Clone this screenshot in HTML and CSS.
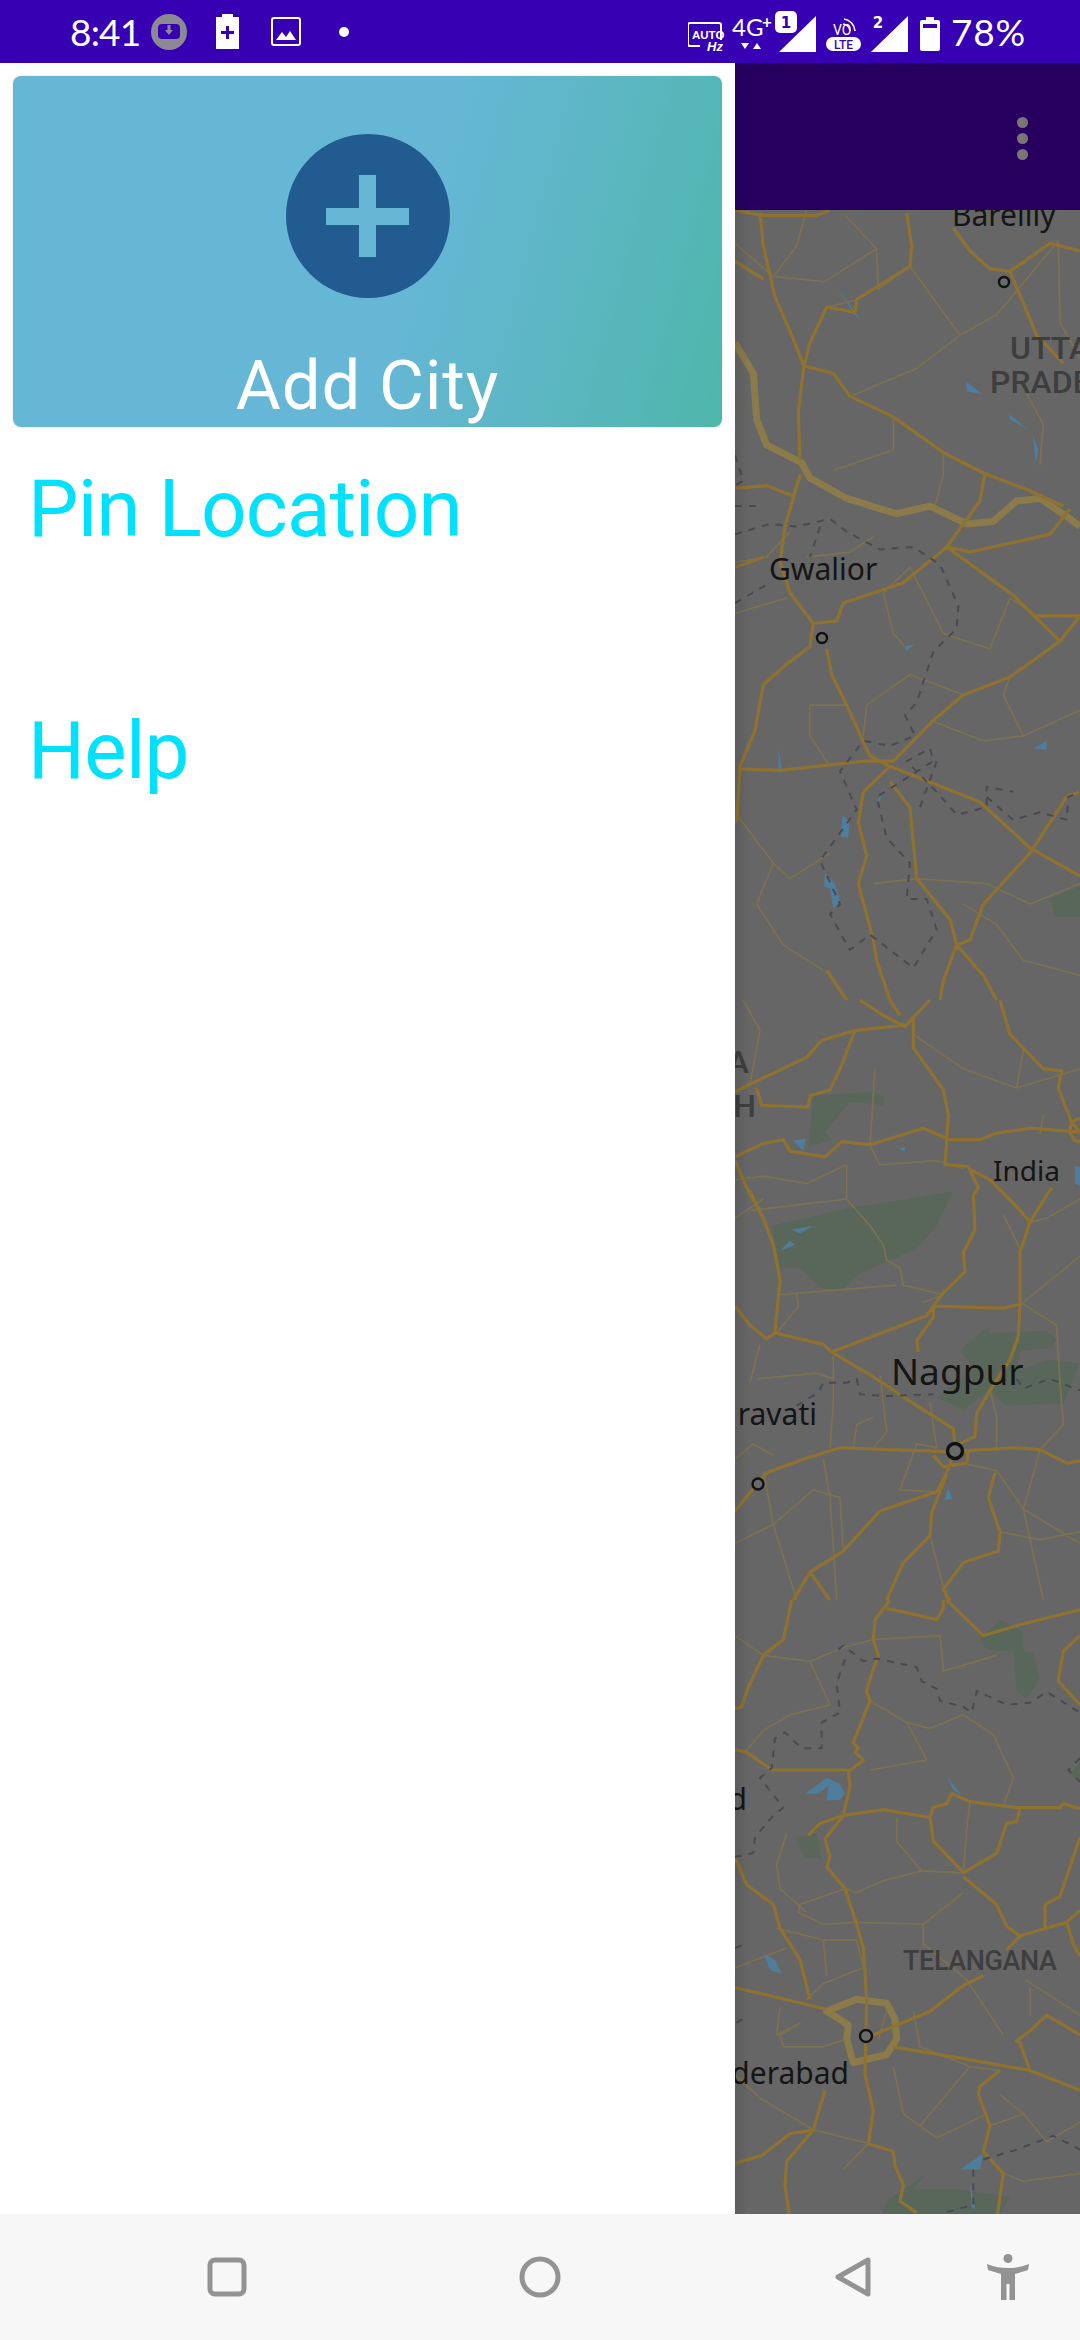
FILE: index.html
```html
<!DOCTYPE html>
<html lang="en">
<head>
  <meta charset="UTF-8" />
  <meta name="viewport" content="width=device-width, initial-scale=1.0"/>
  <title>Add City</title>
  <link rel="stylesheet" href="styles.css">
</head>
<body>

  <div class="status-bar">
    <div class="status-left">
      <span class="status-text status-time">8:41</span>
      <svg class="icon-download" width="36" height="36" viewBox="0 0 36 36">
        <circle cx="18" cy="18" r="18" fill="#8b8a94"/>
        <rect x="7" y="10" width="22" height="15" rx="4" fill="#3700b3"/>
        <path d="M16.5 11h3v5h2.500l-4 5-4-5h2.500z" fill="#8b8a94"/>
      </svg>
      <svg class="icon-charge" width="23" height="35" viewBox="0 0 23 35">
        <path d="M6 0h11v3h6v32H0V3h6z" fill="#fff"/>
        <path d="M10 12h3v5h5v3h-5v5h-3v-5H5v-3h5z" fill="#3700b3"/>
      </svg>
      <svg class="icon-image" width="30" height="29" viewBox="0 0 30 29">
        <rect x="1" y="1" width="28" height="27" rx="2" fill="none" stroke="#fff" stroke-width="2"/>
        <path d="M5 23l6-8 4 5 4-6 6 9z" fill="#fff"/>
      </svg>
      <svg class="icon-dot" width="10" height="10" viewBox="0 0 10 10"><circle cx="5" cy="5" r="5" fill="#fff"/></svg>
    </div>
    <div class="status-right">
      <svg width="256" height="46" viewBox="688 6 256 46">
        <!-- auto hz -->
        <path d="M700 43h-10a2 2 0 0 1-2-2V22a2 2 0 0 1 2-2h29a2 2 0 0 1 2 2v15" fill="none" stroke="#fff" stroke-width="2"/>
        <text class="si-auto" x="692" y="36">AUTO</text>
        <text class="si-hz" x="707" y="48">Hz</text>
        <!-- 4G+ -->
        <text class="si-4g" x="732" y="33">4G</text>
        <text class="si-plus" x="762" y="25">+</text>
        <path d="M741 40h8l-4 6zM753 46h8l-4-6z" fill="#fff"/>
        <!-- sim 1 -->
        <path d="M816 13v36h-37z" fill="#fff"/>
        <rect x="775" y="8" width="22" height="22" rx="5" fill="#fff"/>
        <text class="si-sim" x="786" y="25">1</text>
        <!-- volte -->
        <text class="si-vo" x="833" y="32">VO</text>
        <path d="M843 21a8 8 0 0 1 7 7M844 16a13 13 0 0 1 11 12" fill="none" stroke="#fff" stroke-width="1.6"/>
        <rect x="826" y="34" width="35" height="14" rx="7" fill="#fff"/>
        <text class="si-lte" x="843.5" y="46">LTE</text>
        <!-- sim 2 -->
        <text class="si-two" x="878" y="25">2</text>
        <path d="M908 13v36h-37z" fill="#fff"/>
        <!-- battery -->
        <path d="M926 14h8v3h4a2 2 0 0 1 2 2v27a2 2 0 0 1-2 2h-16a2 2 0 0 1-2-2V19a2 2 0 0 1 2-2h4z" fill="#fff"/>
        <rect x="923" y="21" width="14" height="4" fill="#3700b3"/>
      </svg>
      <span class="status-text battery-text">78%</span>
    </div>
  </div>

  <div class="main">
    <div class="drawer">
      <div class="add-card">
        <div class="add-circle">
          <svg width="83" height="82" viewBox="0 0 83 82"><path d="M33 0h17v33h33v17H50v32H33V50H0V33h33z" fill="#66b7d6"/></svg>
        </div>
        <div class="add-label">Add City</div>
      </div>
      <div class="menu-item">Pin Location</div>
      <div class="menu-item">Help</div>
    </div>

    <div class="content">
      <div class="toolbar">
        <div class="overflow-dots"><span></span><span></span><span></span></div>
      </div>
      <div class="map">
        <svg width="345" height="2004" viewBox="735 210 345 2004">
          <!-- top section -->
          <g transform="translate(730 200) scale(.33333 .5102)">
            <path class="park" d="M960 1370L1050 1345V1405H975Z"/>
            <path class="lake" d="M708 355L755 380L710 375ZM838 420L895 450L840 430ZM908 460L925 490L918 515ZM525 875L555 870L528 885ZM145 1075L155 1115L145 1115ZM910 1075L950 1060V1078ZM338 1205L358 1220L355 1250L332 1248ZM285 1320L315 1340L330 1375L310 1390L300 1350L282 1345ZM320 170L395 238L370 222ZM440 1180L465 1150L445 1185Z"/>
            <path class="minor" d="M15 85L130 150L285 160L440 95L345 30M130 150L200 90L230 20M440 95L445 175L540 130M290 210L385 195M690 265L540 130M690 265L560 330L360 385M690 265L800 225L985 80L990 240L1050 310M490 425L490 490L310 530M640 495L640 540L610 610M780 880L840 780L920 815M780 880L640 850L540 720L460 770L490 850L525 875M840 935L820 970L880 1050L1050 1000M880 1050L760 1060L600 1020M700 970L540 930L410 990L400 1050M350 990L240 990L240 1050L300 1110M15 1200L130 1300L80 1380L160 1460L280 1510M130 1300L180 1330L300 1280M560 1330L770 1340L900 1380L1050 1340M430 1340L560 1330M890 380L940 440L930 520M15 710L110 700L180 650M15 810L170 780M230 700L360 690L430 660M700 1380L800 1420L880 1490L1050 1520"/>
            <path class="thick" d="M15 280L70 340L80 430L110 480L215 515L240 545L350 585L500 615L600 600L710 635L790 630L860 590L930 585L1020 625L1050 640"/>
            <path class="road" d="M90 25L100 90L135 190L185 265L222 325M530 25L545 90L540 130L380 195L375 220L290 210L240 280L222 325L205 415L210 510M222 325L310 340L360 385L490 425L640 495L760 535L900 570L1000 600M15 120L100 155M15 565L110 560L190 580L210 540L165 640L150 710L180 770L250 830L240 875L170 910L100 950L75 1040L30 1110L20 1220M250 830L320 825L340 790L520 750L650 680L750 590L765 535M650 680L720 690L860 670L960 655L1020 605M650 680L850 775L990 865L1050 815M920 815H1050M990 865L840 935L700 970L610 1020L490 1100L400 1100L150 1118L30 1115M290 880L305 930L350 990L420 1090L480 1110L750 1180L900 1270L1050 1325M480 1110L400 1160L385 1220L410 1285L385 1340L430 1450L440 1490L480 1568M480 1140L540 1190L560 1330L660 1410L680 1460L640 1530L630 1568M1050 1160L1010 1170L900 1280L760 1380L720 1450L680 1460L760 1520L800 1568M290 1510L350 1568M670 55L720 100L780 135L840 140L960 85L1050 100M840 140L920 265L1000 320M15 20L90 30L260 30L300 20M15 720L100 700"/>
            <path class="border" d="M15 655L120 635L200 640L300 625L350 650L450 685L550 680L630 715L685 795L680 840L610 885L560 985L525 1010L555 1050L480 1070L400 1060L330 1120L380 1195L270 1295L330 1380L300 1400L360 1470L420 1440L550 1505L620 1430L590 1370L530 1370L540 1300L470 1250L440 1170L610 1100L600 1075L530 1100L620 1160L680 1205L770 1190L770 1150L850 1160M15 790L120 750M15 500L40 550L15 560M15 600L85 600M270 640L240 700M770 1170L850 1215L930 1200L1010 1215L1015 1170L1050 1160M570 1190L620 1100"/>
          </g>

          <!-- middle section -->
          <g transform="translate(730 1000) scale(.33333 .3827)">
            <path class="park" d="M125 590L350 545L670 500L620 590L560 650L390 715L340 755L280 755L210 700L150 700ZM250 250L430 240L465 255L460 275L360 265L285 345L305 365L235 385ZM690 915L770 855L780 870L950 865L980 885L965 910L870 915L860 970L960 940L1050 950L1000 1055L830 1060L780 1020L700 1070L620 1040L730 960Z"/>
            <path class="lake" d="M190 368L228 362L220 395ZM505 388L525 384V396ZM185 600L250 590L210 610ZM150 655L180 630L195 640ZM1035 435H1050V485L1035 480ZM655 1275L668 1305H645Z"/>
            <path class="minor" d="M350 430V520L420 590L460 640L470 680L510 700L520 745L640 770M60 550L350 520M15 570L100 520M200 770L205 800L140 870M150 770L500 745M310 930V1050L300 1170M90 900L60 1000M80 990L260 975L310 990M880 790L1050 670M820 560L870 650M435 180L420 380L450 430L620 420L700 440M640 770L580 790M15 470L100 460L230 480L350 430M550 90L700 180L860 230L1050 180M860 230L880 130M940 300L930 350M1050 520L950 570L900 580M870 790L980 850L990 1000L1000 1110L930 1175M450 980L470 1130L430 1170M600 1050L620 1170L560 1160L510 1280L620 1285M370 1170L380 1110L430 1090M280 1200L300 1300L320 1568M100 1230L130 1370L200 1568M15 1200L70 1160L130 1190M15 1420L130 1370L250 1280L330 1300L340 1440M700 1210L800 1230L880 1330L1050 1420M810 1390L930 1410L1050 1390M930 1175L900 1270L880 1330L940 1568M600 1400L650 1568M800 1180L800 1090L780 1020M40 0L90 80L60 220"/>
            <path class="road" d="M390 0L460 40L525 70L550 45L600 0M480 0L510 40M525 65L375 80L275 105L230 150L60 220L15 240M375 80L335 170L300 235L240 250L235 280L95 275L80 230M550 45V125L640 235L655 300L645 430L715 435L745 490L730 510L735 600L700 660L705 710L635 770L610 800V830L560 890L565 920M810 0L840 90L940 180L995 185L985 230L1025 320L1050 345M15 410L100 375L160 365L180 395L285 410L335 370L420 378L580 335L660 365L750 365L800 348L900 335L1050 345M15 420L50 490L100 570L130 640L150 730L135 870L110 885L60 850L15 800M135 870L280 900L305 920L590 825L610 800L820 805L870 795V660L900 580L965 490M715 440L780 470L860 540L900 580M870 795L865 880L840 940L780 1020L740 1080L735 1140L675 1165L670 1120L560 1060L430 985L305 920M15 1335L110 1235L220 1200L330 1170L650 1180M700 1178L850 1170L930 1175L1010 1210L1050 1205M670 1190L650 1235L620 1285L450 1335L340 1440L240 1495L190 1568M650 1240L605 1340L600 1400L520 1470L470 1568M795 1235L775 1300L810 1390L805 1440L700 1470L640 1540L660 1568M240 1495L300 1568M610 1190L640 1220L710 1210L715 1180M1050 310A30 30 0 0 0 1050 370M60 500L100 570"/>
            <path class="border" d="M200 1060L265 1025L280 1000L350 1000L380 990L390 1030L470 1035L610 1030M860 990L880 1015L960 990L1050 1020"/>
          </g>

          <!-- bottom section -->
          <g transform="translate(730 1600) scale(.33333 .3954)">
            <path class="park" d="M750 100L810 50L880 80V130L910 135L930 200L890 250L860 230L850 130L770 125ZM195 600L260 590L275 655L225 650ZM470 1520L540 1480L590 1450L550 1490L680 1490L840 1510L800 1568H450ZM1020 440L1050 410V460Z"/>
            <path class="lake" d="M225 490L290 450L330 465L345 490L330 505L290 507L295 470L265 490ZM100 895L135 910L155 945L120 935ZM650 445L695 495L670 480ZM690 1440L760 1400L750 1440ZM720 1470L735 1540L725 1535Z"/>
            <path class="minor" d="M15 90L100 140L240 155L340 120L430 100L630 90L640 180L800 140M240 155L300 265L180 290L100 330L50 380M530 310L420 255M530 310L600 325L700 290L790 340L850 450L820 520M590 405L420 430M590 405L550 340L530 310M500 550V610L575 685L700 690L710 580L720 510M575 685L460 710L380 740L345 730L210 770L205 790L280 820L380 815L580 820L700 740M580 820V870L710 960L820 1100M170 590L140 670L150 730L230 790M140 830L280 860L380 860L400 930L280 970L230 1010M280 860L290 950M15 930L170 880M150 1030L140 1100L210 1070L150 1100L160 1130L280 1130L350 1110M470 1040L445 1110M490 1180L520 1300L620 1360L770 1300M570 1330L720 1180M550 1040L570 1130L720 1180L810 1190M900 980L900 1050M885 960L1050 1050M340 1440L415 1375M810 1250L880 1300L950 1370L1050 1320M880 1300L780 1330M820 1450L880 1470L1050 1450M15 1200L90 1260L250 1340M250 1340L420 1375"/>
            <path class="thick" d="M290 1040L380 1010L470 1020L495 1060L500 1110L470 1150L370 1170L350 1110L355 1075L310 1050Z"/>
            <path class="road" d="M185 0L160 100L100 140L55 220L35 270L15 275M480 0L435 50L430 100L445 140L420 200L410 230L420 255L370 360L385 375L375 385L400 405L355 435L360 470L340 545L285 605L300 650L290 675L345 730L380 820L400 880L410 1010L405 1200L430 1290L415 1375L490 1395L495 1430L520 1480L510 1520L560 1550M640 0V20L620 50L520 30L470 22M650 0L760 90L880 60L1050 25M15 378L50 385L125 430H355M235 595L270 565L340 545L460 530L600 550L610 525L650 515L665 490L720 510L860 525H990L1000 515L1050 528M600 550L610 610L690 680L700 690L800 640L830 565L860 560L870 530M700 700L800 770L830 825L870 850L830 885M870 850L1010 815L1050 785M945 830V770L990 750L1050 600M15 650L50 720L130 770L150 830L210 910L240 1010M15 980L290 1035M490 1130L700 1160L900 1190L1050 1240M900 1190L870 1120L860 1115L900 1090L950 1050L1050 1100M430 1100L600 1040L700 975L760 950M810 1190L750 1230L745 1250L780 1330L760 1395L820 1450L800 1568M285 1240L250 1340L180 1350L95 1405L15 1425M250 1340L170 1420L165 1480L180 1568M1050 90L1000 130L985 205L1050 265M1010 815L1030 870L1050 900"/>
            <path class="border" d="M325 125L340 115L400 155L440 148L560 170L575 205L620 225L630 255L700 270L725 285L740 230L830 265L900 260L950 232L1050 285M345 150L320 210L330 285L275 310V375H215L165 335L135 350L125 425L90 450L160 525L125 550L75 600L70 640L15 650M1050 400L1015 430L1050 460M760 1415L860 1390L970 1355L1050 1390M730 1440V1530L640 1550M15 880L45 870M20 1070L50 1050"/>
          </g>

          <!-- cities -->
          <circle class="city" cx="1004" cy="282" r="5"/>
          <circle class="city" cx="822" cy="638" r="5"/>
          <circle class="city" cx="758" cy="1484" r="5.5"/>
          <circle class="city city-large" cx="955" cy="1451" r="7.5"/>
          <circle class="city" cx="866" cy="2036" r="6"/>

          <!-- labels -->
          <text class="map-label" x="952" y="226">Bareilly</text>
          <text class="map-label" x="769" y="580">Gwalior</text>
          <text class="map-label map-small" x="993" y="1181">India</text>
          <text class="map-label map-large" x="891" y="1385">Nagpur</text>
          <text class="map-label map-end" x="817" y="1425">ravati</text>
          <text class="map-label map-end" x="747" y="1810">d</text>
          <text class="map-label map-end" x="849" y="2084">derabad</text>
          <text class="map-state" x="1010" y="359">UTTAR</text>
          <text class="map-state" x="990" y="393">PRADESH</text>
          <text class="map-state map-end" x="749" y="1073">A</text>
          <text class="map-state map-end" x="756" y="1117">H</text>
          <text class="map-state map-telangana" x="903" y="1970">TELANGANA</text>
        </svg>
        <div class="drawer-shade"></div>
      </div>
    </div>
  </div>

  <div class="nav-bar">
    <svg class="nav-square" width="40" height="40" viewBox="0 0 40 40"><rect x="3" y="3" width="34" height="34" rx="5" fill="none" stroke="#939393" stroke-width="5"/></svg>
    <svg class="nav-circle" width="42" height="42" viewBox="0 0 42 42"><circle cx="21" cy="21" r="18" fill="none" stroke="#939393" stroke-width="5"/></svg>
    <svg class="nav-back" width="36" height="42" viewBox="0 0 36 42"><path d="M33 4V38L3 21Z" fill="none" stroke="#939393" stroke-width="5" stroke-linejoin="round"/></svg>
    <svg class="nav-person" width="42" height="46" viewBox="0 0 42 46">
      <circle cx="21" cy="4.500" r="4.500" fill="#939393"/>
      <path d="M0 10C8 13 14 14 21 14S34 13 42 10L41 16L28 20V46H22.500V30H19.500V46H14V20L1 16Z" fill="#939393"/>
    </svg>
  </div>

</body>
</html>
```

FILE: styles.css
```css
body {
  margin: 0;
  width: 1080px;
  height: 2340px;
  overflow: hidden;
  display: flex;
  flex-direction: column;
  font-family: Roboto, sans-serif;
  background: #fff;
}

/* status bar */
.status-bar {
  height: 63px;
  flex: none;
  display: flex;
  justify-content: space-between;
  align-items: center;
  padding: 0 54px 0 70px;
  background: #3700b3;
}

.status-left,
.status-right {
  display: flex;
  align-items: center;
}

.status-text {
  font-family: Lato, sans-serif;
  font-weight: 400;
  font-size: 37px;
  color: #fff;
}

.status-time { letter-spacing: -0.8px; }

.icon-download { margin-left: 11px; }
.icon-charge { margin-left: 29px; }
.icon-image { margin-left: 32px; }
.icon-dot { margin-left: 38px; }

.battery-text { margin-left: 7px; letter-spacing: 0.8px; }

.si-auto { font: 700 11.5px "Liberation Sans", sans-serif; fill: #fff; }
.si-hz { font: italic 700 13px "Liberation Sans", sans-serif; fill: #fff; }
.si-4g { font: 400 24px Lato, sans-serif; fill: #fff; }
.si-plus { font: 700 17px Lato, sans-serif; fill: #fff; }
.si-sim { font: 700 15px "DejaVu Sans", sans-serif; fill: #3700b3; text-anchor: middle; }
.si-vo { font: 400 14px Roboto, sans-serif; fill: #fff; }
.si-lte { font: 500 12px Roboto, sans-serif; fill: #3700b3; text-anchor: middle; }
.si-two { font: 700 15px "DejaVu Sans", sans-serif; fill: #fff; text-anchor: middle; }

/* page body */
.main {
  flex: 1;
  display: flex;
  min-height: 0;
}

.drawer {
  width: 735px;
  flex: none;
  box-sizing: border-box;
  padding-top: 13px;
  background: #fff;
}

.add-card {
  height: 351px;
  margin: 0 13px;
  box-sizing: border-box;
  padding-top: 58px;
  display: flex;
  flex-direction: column;
  align-items: center;
  border-radius: 8px;
  background: linear-gradient(105deg, #66b7d6 55%, #4fb6ab 100%);
  box-shadow: 0 0 2px rgba(0,0,0,0.2);
}

.add-circle {
  width: 164px;
  height: 164px;
  flex: none;
  display: flex;
  align-items: center;
  justify-content: center;
  border-radius: 50%;
  background: #215b90;
}

.add-label {
  margin-top: 47px;
  font-size: 69px;
  line-height: 81px;
  letter-spacing: 0.8px;
  color: #fff;
}

.menu-item {
  height: 242px;
  padding-left: 28px;
  font-size: 80px;
  line-height: 94px;
  letter-spacing: -0.8px;
  color: #00e1ff;
}

.add-card + .menu-item { margin-top: 35px; }

/* dimmed side */
.content {
  flex: 1;
  display: flex;
  flex-direction: column;
  min-width: 0;
}

.toolbar {
  height: 147px;
  flex: none;
  display: flex;
  align-items: center;
  justify-content: flex-end;
  padding-right: 52px;
  background: #27005f;
}

.overflow-dots {
  display: flex;
  flex-direction: column;
  gap: 5px;
  margin-top: 3px;
}

.overflow-dots span {
  width: 11px;
  height: 11px;
  border-radius: 50%;
  background: #777;
}

.map {
  position: relative;
  flex: 1;
  overflow: hidden;
  background: #666;
}

.map svg {
  display: block;
}

.drawer-shade {
  position: absolute;
  top: 0;
  bottom: 0;
  left: 0;
  width: 14px;
  background: linear-gradient(to right, rgba(0,0,0,0.1), rgba(0,0,0,0));
}

/* map drawing */
.road, .minor, .thick, .border {
  fill: none;
  stroke-linejoin: round;
  vector-effect: non-scaling-stroke;
}

.road { stroke: #8f7230; stroke-width: 3.2px; }
.minor { stroke: #7c7150; stroke-width: 1.7px; }
.thick { stroke: #8b7a4a; stroke-width: 7px; }
.border { stroke: #4a4a52; stroke-width: 2px; stroke-dasharray: 7 7; }
.park { fill: #59675b; }
.lake { fill: #4f7d9c; }

.city { fill: #6a6a6a; stroke: #111; stroke-width: 2.4px; }
.city-large { stroke-width: 3.4px; }

.map-label {
  font: 400 30px "Noto Sans", sans-serif;
  fill: #151515;
}

.map-small { font-size: 28px; }
.map-large { font-size: 37px; }
.map-end { text-anchor: end; }

.map-state {
  font: 500 32px Roboto, sans-serif;
  fill: #3e3e3e;
}

.map-telangana { font-size: 27px; letter-spacing: -0.4px; }

/* nav bar */
.nav-bar {
  height: 126px;
  flex: none;
  display: flex;
  align-items: center;
  padding-left: 207px;
  box-sizing: border-box;
  background: #f7f7f7;
}

.nav-circle { margin-left: 272px; }
.nav-back { margin-left: 274px; }
.nav-person { margin-left: 116px; }
```
